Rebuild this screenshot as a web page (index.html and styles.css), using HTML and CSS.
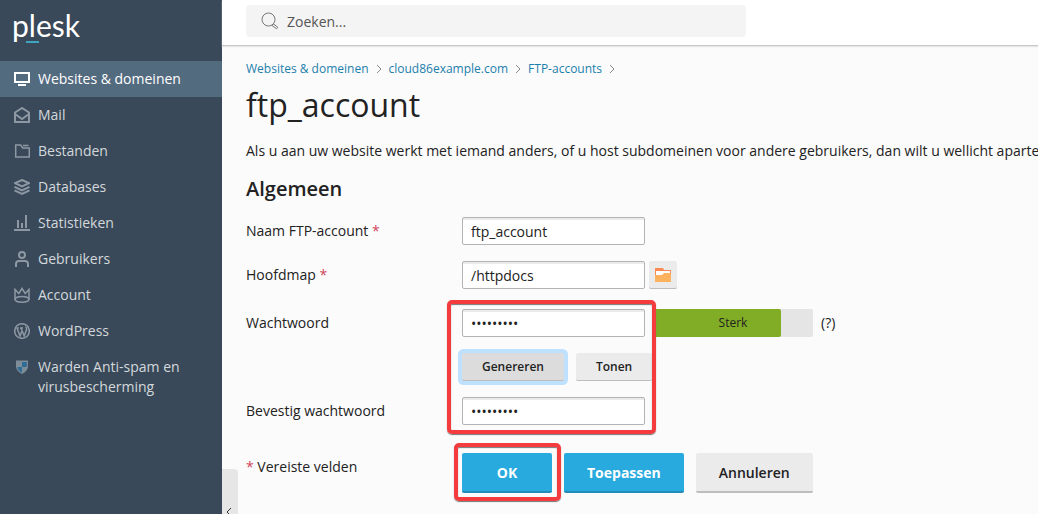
FILE: index.html
```html
<!DOCTYPE html>
<html lang="nl">
<head>
    <meta charset="UTF-8">
    <meta name="viewport" content="width=device-width, initial-scale=1.0">
    <title>ftp_account - Plesk</title>
    <link rel="stylesheet" href="styles.css">
</head>
<body>
    <aside class="sidebar">
        <a href="#" class="logo">p<span class="logo-mark">l</span>esk</a>
        <nav class="nav">
            <a href="#" class="nav-item active">
                <svg class="icon" viewBox="0 0 16 16"><path d="M1 2h14v9H1z"/><path d="M4 14h8"/></svg>
                <span>Websites &amp; domeinen</span>
            </a>
            <a href="#" class="nav-item">
                <svg class="icon" viewBox="0 0 16 16"><path d="M1 5.500 8 1l7 4.500V15H1z"/><path d="M1 7l7 5 7-5"/></svg>
                <span>Mail</span>
            </a>
            <a href="#" class="nav-item">
                <svg class="icon" viewBox="0 0 16 16"><path class="thin" d="M1.700 2h5l2 3h6.600v9H1.700z"/><path class="thin" d="M9 2.500h5.500"/></svg>
                <span>Bestanden</span>
            </a>
            <a href="#" class="nav-item">
                <svg class="icon" viewBox="0 0 16 16"><path d="M8 1l7 3.200-7 3.300-7-3.300z"/><path d="M.5 7.800 8 11.300l7.500-3.500M.5 11.300 8 14.800l7.500-3.500"/></svg>
                <span>Databases</span>
            </a>
            <a href="#" class="nav-item">
                <svg class="icon" viewBox="0 0 16 16"><path d="M0 15h16"/><path d="M4 5v8M8 8v5M12 0v13"/></svg>
                <span>Statistieken</span>
            </a>
            <a href="#" class="nav-item">
                <svg class="icon" viewBox="0 0 16 16"><circle cx="8" cy="4" r="3"/><path d="M2 16v-3q0-3 3-3h6q3 0 3 3v3"/></svg>
                <span>Gebruikers</span>
            </a>
            <a href="#" class="nav-item">
                <svg class="icon" viewBox="0 0 16 16"><path class="thin" d="M1 12.500V2.500l3.800 4L8 1.500l3.200 5 3.800-4v10"/><ellipse class="thin" cx="8" cy="12.300" rx="7" ry="2.900"/></svg>
                <span>Account</span>
            </a>
            <a href="#" class="nav-item">
                <svg class="icon" viewBox="0 0 16 16"><circle class="thin" cx="8" cy="8" r="7.300"/><path class="thin" d="M3 5l3 8L8.200 7.500M7 5l3.200 8 2.400-6.500q.3-1.800-1.100-3M2.300 5h2.500M6 5h3"/></svg>
                <span>WordPress</span>
            </a>
            <a href="#" class="nav-item">
                <svg class="icon shield" viewBox="0 0 16 16">
                    <path fill="#7f8d99" d="M2 1.500h12V8q-.5 4-6 7-5.500-3-6-7z"/>
                    <path fill="#2f6c98" d="M8 3h4.800v5H8zM3.200 8H8v5.700Q3.800 11.500 3.200 8z"/>
                </svg>
                <span>Warden Anti-spam en virusbescherming</span>
            </a>
        </nav>
    </aside>

    <div class="page">
        <header class="topbar">
            <label class="search">
                <svg class="search-icon" viewBox="0 0 18 18"><circle cx="7.500" cy="7.500" r="6.500"/><path d="M11 13.500l1.500-1.500 4.300 3.200-1.300 1.600z"/></svg>
                <input type="text" placeholder="Zoeken..." aria-label="Zoeken">
            </label>
        </header>

        <main class="content">
            <nav class="breadcrumbs">
                <a href="#">Websites &amp; domeinen</a>
                <svg class="sep" viewBox="0 0 6 8"><path d="M1 0l4 4-4 4"/></svg>
                <a href="#">cloud86example.com</a>
                <svg class="sep" viewBox="0 0 6 8"><path d="M1 0l4 4-4 4"/></svg>
                <a href="#">FTP-accounts</a>
                <svg class="sep" viewBox="0 0 6 8"><path d="M1 0l4 4-4 4"/></svg>
            </nav>

            <h1>ftp_account</h1>
            <p class="intro">Als u aan uw website werkt met iemand anders, of u host subdomeinen voor andere gebruikers, dan wilt u wellicht aparte</p>

            <form class="form">
                <h2>Algemeen</h2>
                <div class="row">
                    <label for="name">Naam FTP-account <span class="required">*</span></label>
                    <div class="field">
                        <input class="text-input" type="text" id="name" value="ftp_account">
                    </div>
                </div>
                <div class="row">
                    <label for="home">Hoofdmap <span class="required">*</span></label>
                    <div class="field">
                        <input class="text-input" type="text" id="home" value="/httpdocs">
                        <button type="button" class="btn btn-icon" aria-label="Bladeren">
                            <svg viewBox="0 0 16 14"><path fill="#f98b52" d="M0 0h8l1 2h7v5H0z"/><path fill="#fff" d="M1 3h14v4H1z"/><path fill="#ffb25e" d="M0 7h7l2-2h7v9H0z"/></svg>
                        </button>
                    </div>
                </div>

                <div class="password-group">
                    <div class="row">
                        <label for="password">Wachtwoord</label>
                        <div class="field">
                            <input class="text-input" type="password" id="password" value="wachtwrd1">
                            <div class="strength">
                                <div class="strength-fill" style="width: 80%"></div>
                                <span class="strength-text">Sterk</span>
                            </div>
                            <span class="hint">(?)</span>
                        </div>
                    </div>
                    <div class="row">
                        <span></span>
                        <div class="field buttons">
                            <button type="button" class="btn focused">Genereren</button>
                            <button type="button" class="btn">Tonen</button>
                        </div>
                    </div>
                    <div class="row">
                        <label for="confirm">Bevestig wachtwoord</label>
                        <div class="field">
                            <input class="text-input" type="password" id="confirm" value="wachtwrd1">
                        </div>
                    </div>
                    <div class="highlight highlight-password"></div>
                </div>

                <div class="row actions">
                    <span class="legend"><span class="required">*</span> Vereiste velden</span>
                    <div class="field">
                        <div class="ok-wrap">
                            <button type="submit" class="btn btn-large btn-primary btn-ok">OK</button>
                            <div class="highlight highlight-ok"></div>
                        </div>
                        <button type="button" class="btn btn-large btn-primary">Toepassen</button>
                        <button type="button" class="btn btn-large">Annuleren</button>
                    </div>
                </div>
            </form>
        </main>
        <button type="button" class="collapse" aria-label="Menu inklappen">
            <svg viewBox="0 0 6 10"><path d="M5 1L1 5l4 4"/></svg>
        </button>
    </div>
</body>
</html>
```

FILE: styles.css
```css
* {
    box-sizing: border-box;
}

body {
    margin: 0;
    min-height: 100vh;
    display: flex;
    font-family: "Open Sans", sans-serif;
    font-size: 14px;
    line-height: 20px;
    color: #222;
    background-color: #fbfbfb;
}

a {
    text-decoration: none;
}

svg {
    display: block;
    fill: none;
    flex-shrink: 0;
}

button,
input {
    font-family: inherit;
    color: inherit;
}

/* Sidebar */
.sidebar {
    width: 222px;
    flex-shrink: 0;
    background-color: #394959;
}

.logo {
    display: block;
    height: 61px;
    padding: 5px 12px;
    font-family: Lato, sans-serif;
    font-size: 30px;
    font-weight: 400;
    line-height: 40px;
    color: #fff;
}

.logo-mark {
    position: relative;
}

.logo-mark::after {
    content: "";
    position: absolute;
    left: -3px;
    bottom: 0;
    width: 13px;
    height: 2px;
    background-color: #3fa5bf;
}

.nav-item {
    display: flex;
    gap: 8px;
    padding: 8px 24px 8px 14px;
    font-weight: 500;
    color: #d3d8dc;
}

.nav-item.active {
    background-color: #536b7f;
    color: #fff;
}

.icon {
    width: 16px;
    height: 16px;
    margin-top: 2px;
    stroke: #8d98a3;
    stroke-width: 2;
}

.icon .thin {
    stroke-width: 1.5;
}

.active .icon {
    stroke: #fff;
}

.nav-item .shield {
    stroke: none;
}

/* Top bar */
.page {
    flex: 1;
    min-width: 0;
    position: relative;
}

.topbar {
    padding: 5px 24px 8px;
    background-color: #fff;
    border-bottom: 1px solid #c8c8c8;
    box-shadow: 0 1px 1px #e6e6e6;
}

.search {
    display: flex;
    align-items: center;
    gap: 8px;
    max-width: 500px;
    height: 32px;
    padding: 0 15px;
    background-color: #f4f4f4;
    border-radius: 4px;
}

.search-icon {
    width: 18px;
    height: 18px;
    stroke: #777;
}

.search input {
    flex: 1;
    padding: 0;
    border: none;
    outline: none;
    background: none;
    font-size: 14px;
}

.search input::placeholder {
    color: #555;
}

/* Content */
.content {
    padding: 13px 24px 0;
    overflow: hidden;
}

.breadcrumbs {
    display: flex;
    align-items: center;
    gap: 7px;
    font-size: 12px;
}

.breadcrumbs a {
    color: #1b80ad;
}

.sep {
    width: 6px;
    height: 8px;
    stroke: #888;
}

h1 {
    margin: 6px 0 16px;
    font-size: 32px;
    font-weight: 400;
    line-height: 40px;
}

.intro {
    margin: 0 0 16px;
    white-space: nowrap;
}

h2 {
    margin: 0 0 16px;
    font-size: 20px;
    font-weight: 600;
    line-height: 24px;
}

/* Form */
.row {
    display: grid;
    grid-template-columns: 216px 1fr;
    align-items: center;
    margin-bottom: 16px;
}

.required {
    color: #d0455b;
}

.field {
    display: flex;
    align-items: center;
}

.text-input {
    width: 183px;
    height: 28px;
    padding: 0 8px;
    border: 1px solid #b3b3b3;
    border-radius: 2px;
    background-color: #fff;
    box-shadow: inset 0 2px 0 #ebebeb;
    font-size: 14px;
}

.btn {
    height: 28px;
    padding: 0 20px;
    border: none;
    border-bottom: 1px solid #bdbdbd;
    border-radius: 2px;
    background-color: #ebebeb;
    font-size: 12px;
    font-weight: 600;
}

.btn.focused {
    background-color: #dcdcdc;
    box-shadow: 0 0 0 4px #bde1ff;
}

.buttons {
    gap: 12px;
}

.btn-icon {
    margin-left: 4px;
    padding: 0 6px;
}

.btn-icon svg {
    width: 16px;
    height: 14px;
}

.password-group {
    position: relative;
    margin: 20px 0 28px;
}

.strength {
    position: relative;
    width: 160px;
    height: 28px;
    margin: 0 8px;
    border-radius: 2px;
    background-color: #e5e5e5;
    overflow: hidden;
}

.strength-fill {
    height: 100%;
    border-radius: 2px;
    background-color: #80ad25;
}

.strength-text {
    position: absolute;
    inset: 0;
    font-size: 12px;
    line-height: 28px;
    text-align: center;
}

/* Buttons at the bottom */
.actions .field {
    gap: 12px;
}

.legend {
    margin-bottom: 12px;
}

.ok-wrap {
    position: relative;
}

.btn-large {
    height: 40px;
    padding: 0 23px;
    border-bottom-width: 2px;
    font-size: 14px;
}

.btn-primary {
    border-color: #218bb9;
    background-color: #28aade;
    color: #fff;
    font-weight: 700;
}

.btn-ok {
    width: 90px;
}

/* Red markers */
.highlight {
    position: absolute;
    border: 4px solid #f43b3e;
    border-radius: 5px;
    box-shadow: 0 1px 1px #777, inset 0 1px 1px #777;
    pointer-events: none;
}

.highlight-password {
    top: -9px;
    bottom: -9px;
    left: 201px;
    width: 209px;
}

.highlight-ok {
    top: -10px;
    bottom: -8px;
    left: -8px;
    right: -9px;
}

/* Sidebar toggle */
.collapse {
    position: absolute;
    bottom: 0;
    left: 0;
    display: flex;
    width: 16px;
    height: 45px;
    padding: 38px 4px 0;
    border: none;
    border-radius: 0 4px 0 0;
    background-color: #e6e6e6;
    overflow: hidden;
}

.collapse svg {
    width: 6px;
    height: 10px;
    stroke: #333;
}
```
